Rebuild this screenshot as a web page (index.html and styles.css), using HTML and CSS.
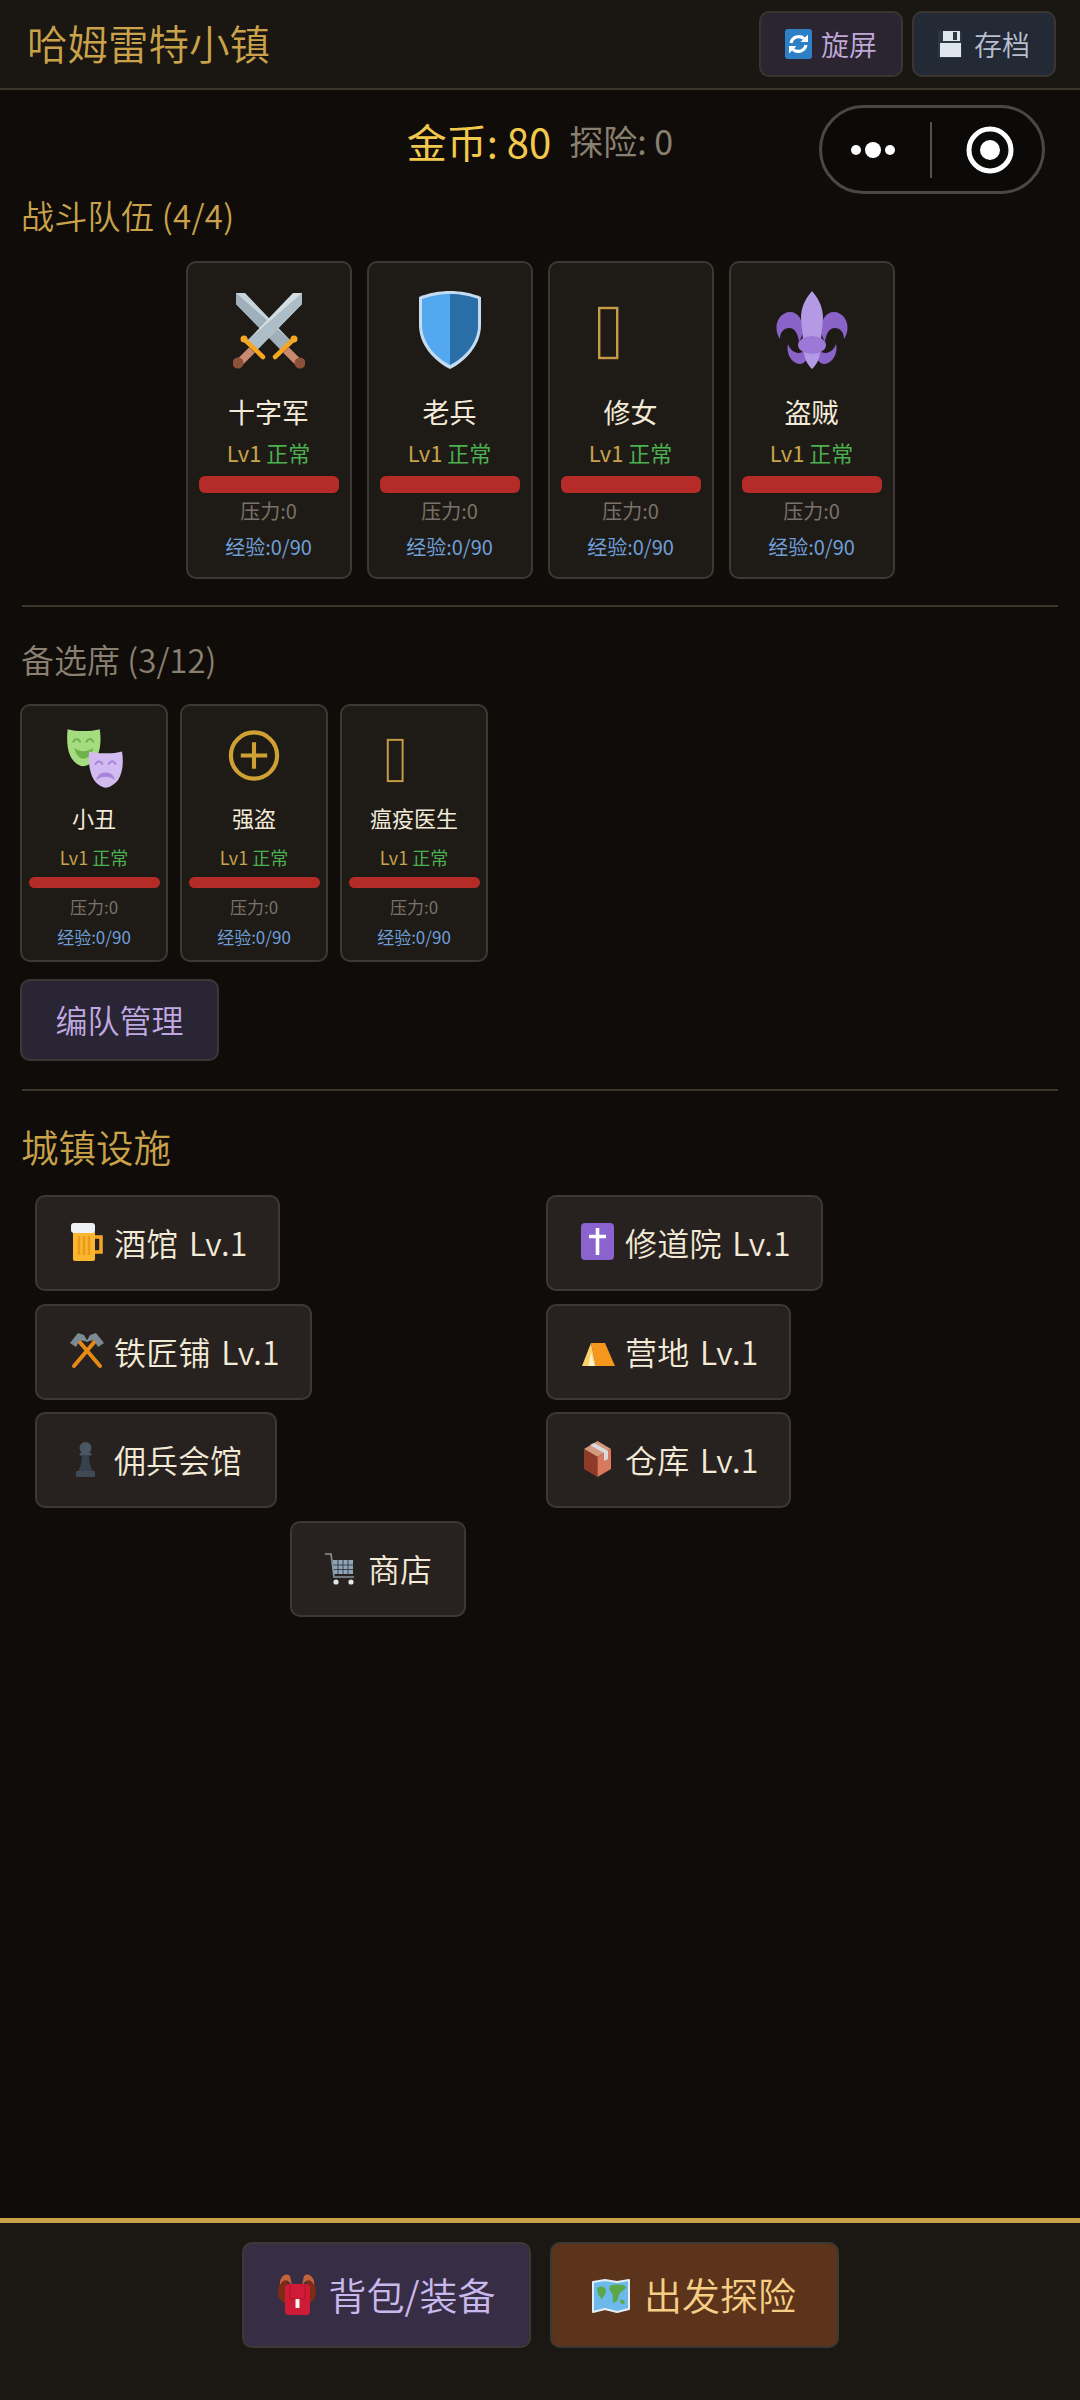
FILE: index.html
```html
<!DOCTYPE html>
<html lang="zh-CN">
<head>
    <meta charset="UTF-8">
    <meta name="viewport" content="width=device-width, initial-scale=1.0">
    <title>哈姆雷特小镇</title>
    <link rel="stylesheet" href="styles.css">
</head>
<body>
    <!-- shared icons -->
    <svg class="icon-defs" xmlns="http://www.w3.org/2000/svg">
        <symbol id="i-swords" viewBox="0 0 72 80">
            <path d="M3 3H12L57 50L48 60L3 14Z" fill="#c5d3db"/>
            <path d="M3 3L57 50L48 60L3 14Z" fill="#9fb0ba"/>
            <path d="M53 60L67 74" stroke="#c98a6f" stroke-width="8"/>
            <circle cx="67" cy="73" r="5.5" fill="#8d5038"/>
            <path d="M42 67L61 49" stroke="#f5a623" stroke-width="4.5" stroke-linecap="round"/>
            <circle cx="61" cy="49" r="3.5" fill="#f5a623"/>
            <path d="M69 3H60L15 50L24 60L69 14Z" fill="#d3dee4"/>
            <path d="M69 3L15 50L24 60L69 14Z" fill="#aebec8"/>
            <path d="M19 60L5 74" stroke="#c98a6f" stroke-width="8"/>
            <circle cx="5" cy="73" r="5.5" fill="#8d5038"/>
            <path d="M30 67L11 49" stroke="#f5a623" stroke-width="4.5" stroke-linecap="round"/>
            <circle cx="11" cy="49" r="3.5" fill="#f5a623"/>
        </symbol>
        <symbol id="i-shield" viewBox="0 0 72 80">
            <path d="M36 1C46 1 58 3 67 7V35C67 55 52 71 36 79C20 71 5 55 5 35V7C14 3 26 1 36 1Z" fill="#c5dcef"/>
            <path d="M36 4C45 4 56 6 64 9V35C64 53 50 68 36 75C22 68 8 53 8 35V9C16 6 27 4 36 4Z" fill="#54a8ef"/>
            <path d="M36 4C45 4 56 6 64 9V35C64 53 50 68 36 75Z" fill="#2a6ea8"/>
        </symbol>
        <symbol id="i-tofu" viewBox="0 0 72 80">
            <rect x="4.2" y="18" width="18" height="50" fill="none" stroke="#c79b45" stroke-width="2.4"/>
        </symbol>
        <symbol id="i-fleur" viewBox="0 0 72 80">
            <path d="M45 44C44 30 50 22 58 22C66 22 72 30 71.500 38C71.500 42 70.500 45 68 49C68 42 64 38 59 38C53 38 50 44 49 52Z" fill="#8a63c8"/>
            <path d="M42 60C50 66 57 62 60 54C62 62 58 72 49 74C45 74 43 72 41 69Z" fill="#8a63c8"/>
            <path d="M27 44C28 30 22 22 14 22C6 22 0 30 0.500 38C0.500 42 1.500 45 4 49C4 42 8 38 13 38C19 38 22 44 23 52Z" fill="#8a63c8"/>
            <path d="M30 60C22 66 15 62 12 54C10 62 14 72 23 74C27 74 29 72 31 69Z" fill="#8a63c8"/>
            <path d="M36 1C44 10 47 19 47 28C47 36 45 42 45 50H27C27 42 25 36 25 28C25 19 28 10 36 1Z" fill="#b49ae4"/>
            <path d="M28 62H44C44 69 40 75 36 79C32 75 28 69 28 62Z" fill="#b49ae4"/>
            <ellipse cx="36" cy="55" rx="14" ry="9" fill="#9d78d6"/>
        </symbol>
        <symbol id="i-masks" viewBox="0 0 72 80">
            <path d="M4 5C14 8 32 8 43 5C45 18 44 32 38 41C33 47 27 50 22 50C16 49 10 44 7 37C3 28 3 15 4 5Z" fill="#a5dc7f"/>
            <path d="M11 20Q15 14 19 20M27 20Q31 14 35 20" fill="none" stroke="#6fb24c" stroke-width="2.6" stroke-linecap="round"/>
            <path d="M12 28C18 33 28 33 35 28C33 38 27 41 23 41C18 41 14 36 12 28Z" fill="#6fb24c"/>
            <path d="M30 32C40 35 60 35 70 32C72 45 71 58 65 67C60 73 54 76 50 76C44 75 37 70 34 63C30 54 29 42 30 32Z" fill="#d3bbf2"/>
            <path d="M38 47Q42 41 46 47M54 47Q58 41 62 47" fill="none" stroke="#a885d8" stroke-width="2.6" stroke-linecap="round"/>
            <path d="M40 65C43 56 57 56 60 65C55 61 45 61 40 65Z" fill="#a885d8" stroke="#a885d8" stroke-width="1.5"/>
        </symbol>
        <symbol id="i-plus" viewBox="0 0 72 80">
            <circle cx="36" cy="37" r="28" fill="none" stroke="#cfa133" stroke-width="5"/>
            <path d="M36 21V53M20 37H52" stroke="#cfa133" stroke-width="5"/>
        </symbol>
        <symbol id="i-beer" viewBox="0 0 36 40">
            <path d="M25 15H31V30H25" fill="none" stroke="#f5a623" stroke-width="3.5"/>
            <rect x="3" y="8" width="22" height="31" rx="2" fill="#fbb62f"/>
            <path d="M9 14V33M14 14V33M19 14V33" stroke="#e99a1c" stroke-width="2.4"/>
            <rect x="1" y="1" width="24" height="10" rx="3" fill="#eef1f3"/>
        </symbol>
        <symbol id="i-hammers" viewBox="0 0 36 40">
            <path d="M4 35L26 9M30 35L8 9" stroke="#e58a16" stroke-width="4" stroke-linecap="round"/>
            <path d="M0 12L8 2L14 4L18 11L10 9L6 16Z" fill="#7c8a94"/>
            <path d="M34 12L26 2L20 4L16 11L24 9L28 16Z" fill="#7c8a94"/>
        </symbol>
        <symbol id="i-pawn" viewBox="0 0 36 40">
            <circle cx="15.5" cy="9" r="6" fill="#4a5662"/>
            <rect x="9.5" y="14" width="12" height="2.5" rx="1" fill="#4a5662"/>
            <path d="M12 16C12 24 10 28 8 33H23C21 28 19 24 19 16Z" fill="#36414d"/>
            <rect x="6" y="32" width="19" height="6" rx="1" fill="#3f4a56"/>
        </symbol>
        <symbol id="i-cart" viewBox="0 0 36 40">
            <rect x="8" y="12" width="20" height="14" fill="#8fa6b8"/>
            <path d="M13 12V26M18 12V26M23 12V26M8 17H28M8 21.500H28" stroke="#3a4148" stroke-width="1"/>
            <path d="M0 6H6L9 29H29" fill="none" stroke="#8a949c" stroke-width="1.6"/>
            <circle cx="11" cy="34" r="2.600" fill="#e0e6ea"/>
            <circle cx="26" cy="34" r="2.600" fill="#e0e6ea"/>
        </symbol>
        <symbol id="i-cross" viewBox="0 0 36 40">
            <rect x="0" y="1" width="33" height="37" rx="4" fill="#8b63cf"/>
            <path d="M16.500 6V33M8 14.500H25" stroke="#fff" stroke-width="3.600"/>
        </symbol>
        <symbol id="i-tent" viewBox="0 0 36 40">
            <path d="M10 12H24L34 35H15Z" fill="#f7961c"/>
            <path d="M10 12L15 35H1Z" fill="#fdcf6a"/>
            <path d="M10 21L13.500 35H7.500Z" fill="#fff3c8"/>
        </symbol>
        <symbol id="i-box" viewBox="0 0 36 40">
            <path d="M16.500 2L30 10L16.500 18L3 10Z" fill="#d49a80"/>
            <path d="M3 10L16.500 18V38L3 30Z" fill="#8e3a26"/>
            <path d="M30 10L16.500 18V38L30 30Z" fill="#d97a5f"/>
            <path d="M9 6L13 4L27 12V20L23 22V14Z" fill="#d9dade"/>
        </symbol>
        <symbol id="i-refresh" viewBox="0 0 28 30">
            <rect x="0" y="0" width="27" height="30" rx="3" fill="#2e80c6"/>
            <path d="M6 14A8 8 0 0 1 19 9.500M21 16A8 8 0 0 1 8 20.500" fill="none" stroke="#fff" stroke-width="3.200"/>
            <path d="M23 5.500V13H15.500Z M4 24.500V17H11.500Z" fill="#fff"/>
        </symbol>
        <symbol id="i-floppy" viewBox="0 0 28 30">
            <rect x="0" y="2" width="24" height="27" rx="1.500" fill="#2e3742"/>
            <rect x="5" y="2" width="17" height="10" fill="#dfe6ee"/>
            <rect x="15" y="3" width="4" height="8" fill="#2e3742"/>
            <rect x="2" y="14" width="21" height="14" fill="#dfe6ee"/>
        </symbol>
        <symbol id="i-pack" viewBox="0 0 40 46">
            <path d="M11 5C4 5 1 14 1 22C1 26 3 30 8 32L10 14Z" fill="#7c2d14"/>
            <path d="M29 5C36 5 39 14 39 22C39 26 37 30 32 32L30 14Z" fill="#7c2d14"/>
            <path d="M3 10C5 4 9 2 13 5L15 14L11 10C8 8 5 10 3 14Z" fill="#c4623c"/>
            <path d="M37 10C35 4 31 2 27 5L25 14L29 10C32 8 35 10 37 14Z" fill="#c4623c"/>
            <rect x="8" y="13" width="25" height="31" rx="4" fill="#cf1b35"/>
            <path d="M13 14V28H28V14" fill="none" stroke="#b0142b" stroke-width="1"/>
            <rect x="18.500" y="28" width="4" height="9" fill="#f4f4f4"/>
        </symbol>
        <symbol id="i-map" viewBox="0 0 40 46">
            <path d="M1 11L13 9L25 11L37 9V38L25 41L13 38L1 41Z" fill="#6db9ec" stroke="#e4eef5" stroke-width="2" stroke-linejoin="round"/>
            <path d="M5 17C9 14 14 16 14 20C14 24 11 24 11 28C8 28 5 22 5 17Z" fill="#5aa84a"/>
            <path d="M18 15C22 13 32 13 34 16C33 20 28 20 27 24C26 30 23 33 21 31C20 26 22 24 19 21C17 19 17 17 18 15Z" fill="#5aa84a"/>
            <path d="M28 29C30 28 33 29 33 32C31 34 28 33 28 29Z" fill="#5aa84a"/>
        </symbol>
    </svg>

    <header class="top-bar">
        <h1 class="town-name">哈姆雷特小镇</h1>
        <div class="top-actions">
            <button class="top-btn top-btn-rotate"><svg class="top-icon"><use href="#i-refresh"/></svg>旋屏</button>
            <button class="top-btn top-btn-save"><svg class="top-icon"><use href="#i-floppy"/></svg>存档</button>
        </div>
    </header>

    <div class="capsule">
        <svg class="capsule-svg" viewBox="0 0 220 83">
            <circle cx="34" cy="42" r="5" fill="#fff"/>
            <ellipse cx="51" cy="42" rx="8" ry="8" fill="#fff"/>
            <circle cx="68" cy="42" r="5" fill="#fff"/>
            <path d="M109 14V70" stroke="#55524e" stroke-width="2"/>
            <circle cx="168" cy="42" r="21" fill="none" stroke="#fff" stroke-width="5"/>
            <circle cx="168" cy="42" r="10" fill="#fff"/>
        </svg>
    </div>

    <main class="town">
        <div class="stats">
            <span class="gold">金币: 80</span>
            <span class="trips">探险: 0</span>
        </div>

        <h2 class="section-title section-title-party">战斗队伍 (4/4)</h2>
        <div class="party">
            <div class="hero-card">
                <svg class="hero-icon"><use href="#i-swords"/></svg>
                <div class="hero-name">十字军</div>
                <div class="hero-level">Lv1 <span class="ok">正常</span></div>
                <div class="hp-bar"></div>
                <div class="hero-stress">压力:0</div>
                <div class="hero-exp">经验:0/90</div>
            </div>
            <div class="hero-card">
                <svg class="hero-icon"><use href="#i-shield"/></svg>
                <div class="hero-name">老兵</div>
                <div class="hero-level">Lv1 <span class="ok">正常</span></div>
                <div class="hp-bar"></div>
                <div class="hero-stress">压力:0</div>
                <div class="hero-exp">经验:0/90</div>
            </div>
            <div class="hero-card">
                <svg class="hero-icon"><use href="#i-tofu"/></svg>
                <div class="hero-name">修女</div>
                <div class="hero-level">Lv1 <span class="ok">正常</span></div>
                <div class="hp-bar"></div>
                <div class="hero-stress">压力:0</div>
                <div class="hero-exp">经验:0/90</div>
            </div>
            <div class="hero-card">
                <svg class="hero-icon"><use href="#i-fleur"/></svg>
                <div class="hero-name">盗贼</div>
                <div class="hero-level">Lv1 <span class="ok">正常</span></div>
                <div class="hp-bar"></div>
                <div class="hero-stress">压力:0</div>
                <div class="hero-exp">经验:0/90</div>
            </div>
        </div>

        <hr class="divider divider-party">

        <h2 class="section-title section-title-bench">备选席 (3/12)</h2>
        <div class="bench">
            <div class="hero-card hero-card-small">
                <svg class="hero-icon"><use href="#i-masks"/></svg>
                <div class="hero-name">小丑</div>
                <div class="hero-level">Lv1 <span class="ok">正常</span></div>
                <div class="hp-bar"></div>
                <div class="hero-stress">压力:0</div>
                <div class="hero-exp">经验:0/90</div>
            </div>
            <div class="hero-card hero-card-small">
                <svg class="hero-icon"><use href="#i-plus"/></svg>
                <div class="hero-name">强盗</div>
                <div class="hero-level">Lv1 <span class="ok">正常</span></div>
                <div class="hp-bar"></div>
                <div class="hero-stress">压力:0</div>
                <div class="hero-exp">经验:0/90</div>
            </div>
            <div class="hero-card hero-card-small">
                <svg class="hero-icon"><use href="#i-tofu"/></svg>
                <div class="hero-name">瘟疫医生</div>
                <div class="hero-level">Lv1 <span class="ok">正常</span></div>
                <div class="hp-bar"></div>
                <div class="hero-stress">压力:0</div>
                <div class="hero-exp">经验:0/90</div>
            </div>
        </div>
        <button class="manage-btn">编队管理</button>

        <hr class="divider divider-bench">

        <h2 class="section-title section-title-town">城镇设施</h2>
        <div class="buildings">
            <button class="building"><svg class="building-icon"><use href="#i-beer"/></svg><span class="building-label">酒馆 Lv.1</span></button>
            <button class="building"><svg class="building-icon"><use href="#i-cross"/></svg><span class="building-label">修道院 Lv.1</span></button>
            <button class="building"><svg class="building-icon"><use href="#i-hammers"/></svg><span class="building-label">铁匠铺 Lv.1</span></button>
            <button class="building"><svg class="building-icon"><use href="#i-tent"/></svg><span class="building-label">营地 Lv.1</span></button>
            <button class="building building-plain"><svg class="building-icon"><use href="#i-pawn"/></svg><span class="building-label">佣兵会馆</span></button>
            <button class="building"><svg class="building-icon"><use href="#i-box"/></svg><span class="building-label">仓库 Lv.1</span></button>
            <button class="building building-plain building-shop"><svg class="building-icon"><use href="#i-cart"/></svg><span class="building-label">商店</span></button>
        </div>
    </main>

    <footer class="bottom-bar">
        <button class="bottom-btn bottom-btn-pack"><svg class="bottom-icon"><use href="#i-pack"/></svg>背包/装备</button>
        <button class="bottom-btn bottom-btn-go"><svg class="bottom-icon"><use href="#i-map"/></svg>出发探险</button>
    </footer>
</body>
</html>
```
FILE: styles.css
```css
* {
    box-sizing: border-box;
}
body {
    margin: 0;
    height: 2400px;
    display: flex;
    flex-direction: column;
    background: #0f0c0a;
    font-family: "Noto Sans CJK SC", sans-serif;
    font-weight: 350;
    position: relative;
}
button {
    font-family: inherit;
    font-weight: inherit;
    cursor: pointer;
}
.icon-defs {
    display: none;
}

/* top bar */
.top-bar {
    height: 90px;
    flex-shrink: 0;
    display: flex;
    align-items: center;
    justify-content: space-between;
    padding: 0 24px 0 27px;
    background: #1a1612;
    border-bottom: 2px solid #3d362c;
}
.town-name {
    margin: 0 0 3px;
    font-size: 40.5px;
    font-weight: 350;
    color: #c9a24a;
}
.top-actions {
    display: flex;
    gap: 9px;
}
.top-btn {
    width: 144px;
    height: 66px;
    display: flex;
    align-items: center;
    justify-content: center;
    gap: 8px;
    padding: 0;
    border: 2px solid #3a3530;
    border-radius: 10px;
    font-size: 28px;
}
.top-icon {
    width: 28px;
    height: 30px;
}
.top-btn-rotate {
    background: #2a2530;
    color: #c0a9d8;
}
.top-btn-save {
    background: #232a36;
    color: #b9bfd0;
}

/* wechat capsule */
.capsule {
    position: absolute;
    top: 105px;
    left: 819px;
    width: 226px;
    height: 89px;
    border: 3px solid #4a4744;
    border-radius: 45px;
    background: #0b0a09;
}
.capsule-svg {
    display: block;
    width: 220px;
    height: 83px;
}

/* main */
.town {
    flex: 1;
    padding: 24px 22px 0;
}
.stats {
    display: flex;
    justify-content: center;
    align-items: baseline;
    gap: 18px;
    line-height: 54px;
    font-weight: 400;
}
.gold {
    font-size: 40px;
    color: #f2c94c;
}
.trips {
    font-size: 34px;
    color: #8a8070;
    position: relative;
    top: -3px;
}
.section-title {
    margin: 22px 0 0 -1px;
    padding-bottom: 2px;
    font-size: 33px;
    font-weight: 350;
    line-height: 44px;
    color: #c9a24a;
}
.section-title-party {
    letter-spacing: 0.3px;
}
.section-title-bench {
    margin-top: 30px;
    color: #8a8070;
}
.section-title-town {
    margin-top: 31px;
    padding-bottom: 2px;
    font-size: 37.5px;
    line-height: 48px;
}
.party {
    display: flex;
    justify-content: center;
    gap: 15px;
    margin-top: 22px;
}
.bench {
    display: flex;
    gap: 12px;
    margin-top: 21px;
    margin-left: -2px;
}

/* hero card */
.hero-card {
    width: 166px;
    height: 318px;
    display: flex;
    flex-direction: column;
    align-items: center;
    padding-top: 27px;
    background: #1e1b17;
    border: 2px solid #3d3833;
    border-radius: 10px;
    font-weight: 400;
}
.hero-icon {
    width: 72px;
    height: 80px;
    flex-shrink: 0;
}
.hero-name {
    margin-top: 24px;
    font-size: 27px;
    line-height: 36px;
    color: #f3ead7;
}
.hero-level {
    margin-top: 7px;
    font-size: 22px;
    line-height: 30px;
    color: #c9a24a;
}
.ok {
    color: #4caf50;
}
.hp-bar {
    width: 140px;
    height: 17px;
    margin-top: 9px;
    flex-shrink: 0;
    border-radius: 6px;
    background: #b52b27;
}
.hero-stress {
    margin-top: 5px;
    font-size: 20px;
    line-height: 26px;
    color: #7a7268;
}
.hero-exp {
    margin-top: 10px;
    font-size: 20px;
    line-height: 26px;
    color: #6f9fd8;
}
.hero-card-small {
    width: 148px;
    height: 258px;
    padding-top: 19px;
}
.hero-card-small .hero-icon {
    width: 60px;
    height: 66px;
}
.hero-card-small .hero-name {
    margin-top: 11px;
    font-size: 22px;
    line-height: 30px;
}
.hero-card-small .hero-level {
    margin-top: 13px;
    font-size: 18px;
    line-height: 24px;
}
.hero-card-small .hp-bar {
    width: 131px;
    height: 11px;
    margin-top: 8px;
}
.hero-card-small .hero-stress {
    margin-top: 8px;
    font-size: 17px;
    line-height: 22px;
}
.hero-card-small .hero-exp {
    margin-top: 8px;
    font-size: 17px;
    line-height: 22px;
}

.manage-btn {
    display: block;
    width: 199px;
    height: 82px;
    margin: 17px 0 0 -2px;
    padding: 0 0 2px;
    background: #2a2535;
    border: 2px solid #3d3833;
    border-radius: 10px;
    font-size: 32px;
    color: #c0a9e0;
}
.divider {
    height: 2px;
    margin: 0;
    border: none;
    background: #3d362c;
}
.divider-party {
    margin-top: 26px;
}
.divider-bench {
    margin-top: 28px;
}

/* buildings */
.buildings {
    display: grid;
    grid-template-columns: 511px 1fr;
    row-gap: 12.5px;
    justify-items: start;
    margin-top: 23px;
    padding-left: 13px;
}
.building {
    height: 96px;
    display: flex;
    align-items: center;
    gap: 8px;
    padding: 0 30px 2px 33px;
    background: #272220;
    border: 2px solid #3d3833;
    border-radius: 10px;
    font-size: 32px;
    color: #f3ead7;
    white-space: nowrap;
}
.building-label {
    word-spacing: 3px;
    letter-spacing: 0.3px;
}
.building-plain {
    padding-right: 33px;
}
.building-plain .building-label {
    letter-spacing: 0;
}
.building-icon {
    width: 36px;
    height: 40px;
    flex-shrink: 0;
}
.building-shop {
    margin-left: 255px;
    grid-column: 1 / 3;
    gap: 7px;
    padding-right: 32px;
}

/* bottom bar */
.bottom-bar {
    height: 182px;
    flex-shrink: 0;
    display: flex;
    justify-content: center;
    gap: 19px;
    padding-top: 19px;
    background: #1b1814;
    border-top: 5px solid #c9a24a;
}
.bottom-btn {
    width: 289px;
    height: 106px;
    display: flex;
    align-items: center;
    justify-content: center;
    gap: 12px;
    padding: 0 0 3px;
    border: 2px solid #3d3833;
    border-radius: 10px;
    font-size: 38px;
}
.bottom-icon {
    width: 40px;
    height: 46px;
}
.bottom-btn-pack {
    background: #372d45;
    color: #c9b8ec;
}
.bottom-btn-go {
    background: #5c341b;
    color: #f5cf85;
}
```
